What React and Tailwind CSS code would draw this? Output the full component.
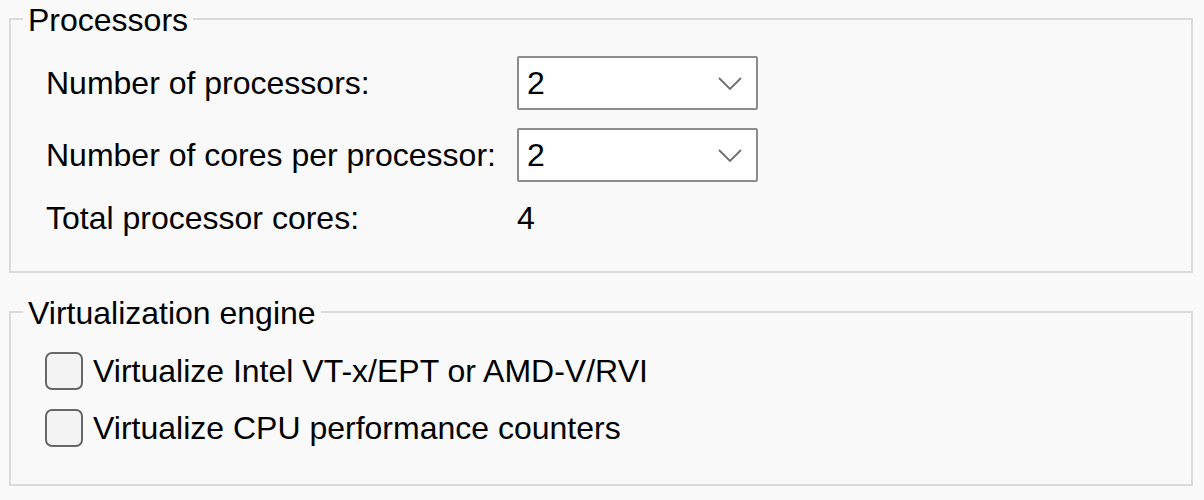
import React from "react";

function Chevron() {
  return (
    <svg width="26" height="15" viewBox="0 0 26 15" className="shrink-0">
      <path d="M2 2 L13 13 L24 2" fill="none" stroke="#6e6e6e" strokeWidth="1.8" />
    </svg>
  );
}

function Combo({ value }) {
  return (
    <div className="flex h-[54px] w-[241px] items-center justify-between rounded-[2px] border-2 border-[#8c8c8c] bg-white pl-[8px] pr-[13px]">
      <span className="leading-[36px]">{value}</span>
      <Chevron />
    </div>
  );
}

function Checkbox({ label }) {
  return (
    <div className="flex items-center gap-[10px]">
      <div className="h-[38px] w-[38px] shrink-0 rounded-[7px] border-2 border-[#666666] bg-[#f3f3f3]" />
      <span className="leading-[36px]">{label}</span>
    </div>
  );
}

export default function App() {
  return (
    <div
      className="h-[500px] w-[1204px] bg-[#f9f9f9] pl-[9px] pr-[11px] text-[32px] text-black"
      style={{ fontFamily: '"Liberation Sans", Arial, sans-serif' }}
    >
      <fieldset className="m-0 border-2 border-[#dadada] px-[12px] pb-[35px] pt-[18px]">
        <legend className="px-[5px] pt-[2px] leading-[36px]">Processors</legend>
        <div className="grid grid-cols-[471px_241px] items-center gap-y-[18px] pl-[23px]">
          <span className="leading-[36px]">Number of processors:</span>
          <Combo value="2" />
          <span className="leading-[36px]">Number of cores per processor:</span>
          <Combo value="2" />
          <span className="leading-[36px]">Total processor cores:</span>
          <span className="leading-[36px]">4</span>
        </div>
      </fieldset>
      <fieldset className="m-0 mt-[20px] border-2 border-[#dadada] px-[12px] pb-[37px] pt-[21px]">
        <legend className="px-[5px] pt-[2px] leading-[36px]">Virtualization engine</legend>
        <div className="flex flex-col gap-[19px] pl-[22px]">
          <Checkbox label="Virtualize Intel VT-x/EPT or AMD-V/RVI" />
          <Checkbox label="Virtualize CPU performance counters" />
        </div>
      </fieldset>
    </div>
  );
}
